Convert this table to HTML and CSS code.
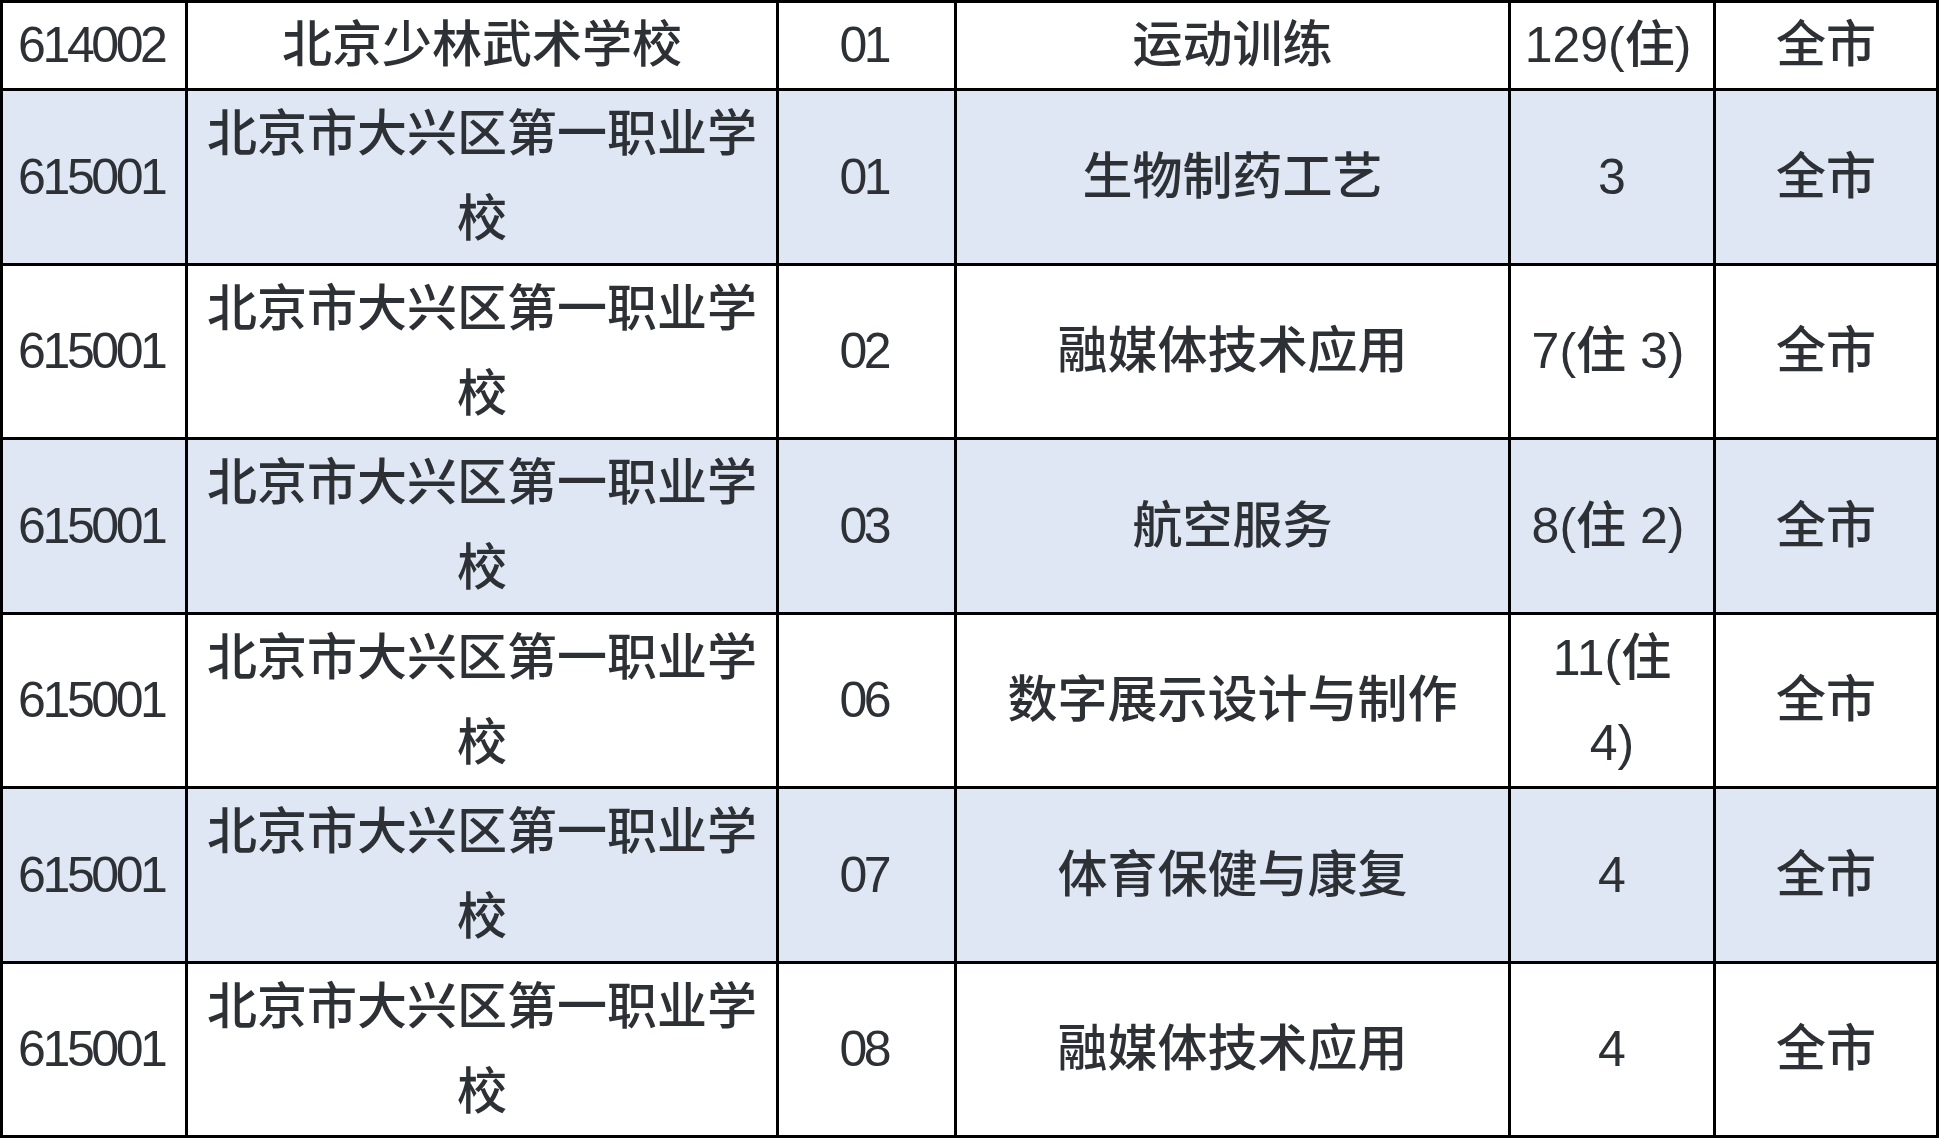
FILE: index.html
```html
<!DOCTYPE html>
<html lang="zh-CN">
<head>
<meta charset="utf-8">
<title>招生计划</title>
<link rel="stylesheet" href="styles.css">
</head>
<body>
<table class="plan">
  <tr class="row first">
    <td class="c1 num">614002</td>
    <td class="c2">北京少林武术学校</td>
    <td class="c3 num">01</td>
    <td class="c4">运动训练</td>
    <td class="c5 cnt">129(住)</td>
    <td class="c6">全市</td>
  </tr>
  <tr class="row tall alt">
    <td class="num">615001</td>
    <td>北京市大兴区第一职业学校</td>
    <td class="num">01</td>
    <td>生物制药工艺</td>
    <td>3</td>
    <td>全市</td>
  </tr>
  <tr class="row short">
    <td class="num">615001</td>
    <td>北京市大兴区第一职业学校</td>
    <td class="num">02</td>
    <td>融媒体技术应用</td>
    <td class="cnt">7(住 3)</td>
    <td>全市</td>
  </tr>
  <tr class="row tall alt">
    <td class="num">615001</td>
    <td>北京市大兴区第一职业学校</td>
    <td class="num">03</td>
    <td>航空服务</td>
    <td class="cnt">8(住 2)</td>
    <td>全市</td>
  </tr>
  <tr class="row short">
    <td class="num">615001</td>
    <td>北京市大兴区第一职业学校</td>
    <td class="num">06</td>
    <td>数字展示设计与制作</td>
    <td>11(住<br>4)</td>
    <td>全市</td>
  </tr>
  <tr class="row tall alt">
    <td class="num">615001</td>
    <td>北京市大兴区第一职业学校</td>
    <td class="num">07</td>
    <td>体育保健与康复</td>
    <td>4</td>
    <td>全市</td>
  </tr>
  <tr class="row short">
    <td class="num">615001</td>
    <td>北京市大兴区第一职业学校</td>
    <td class="num">08</td>
    <td>融媒体技术应用</td>
    <td>4</td>
    <td>全市</td>
  </tr>
</table>
</body>
</html>
```
FILE: styles.css
```css
html, body {
  margin: 0;
  padding: 0;
  background: #ffffff;
}

.plan {
  width: 1939px;
  table-layout: fixed;
  border-collapse: separate;
  border-spacing: 0;
  border-top: 3px solid #000;
  border-left: 3px solid #000;
  font-family: "Liberation Sans", "Noto Sans CJK SC", sans-serif;
  font-size: 50px;
  font-weight: 500;
  color: #2d3035;
}

.plan td {
  box-sizing: border-box;
  border-right: 3px solid #000;
  border-bottom: 3px solid #000;
  padding: 0 10px;
  text-align: center;
  vertical-align: middle;
  line-height: 85px;
  white-space: normal;
}

.plan td.num {
  letter-spacing: -3.4px;
  text-indent: -3.4px;
  padding: 0 11px 0 9px;
}

.plan td.cnt {
  padding: 0 14px 0 6px;
}

.c1 { width: 185px; }
.c2 { width: 591px; }
.c3 { width: 178px; }
.c4 { width: 554px; }
.c5 { width: 205px; }
.c6 { width: 223px; }

.row.first td { height: 88px; }
.row.tall td { height: 175px; }
.row.short td { height: 174px; }

.row.alt td { background: #dee7f3; }
```
